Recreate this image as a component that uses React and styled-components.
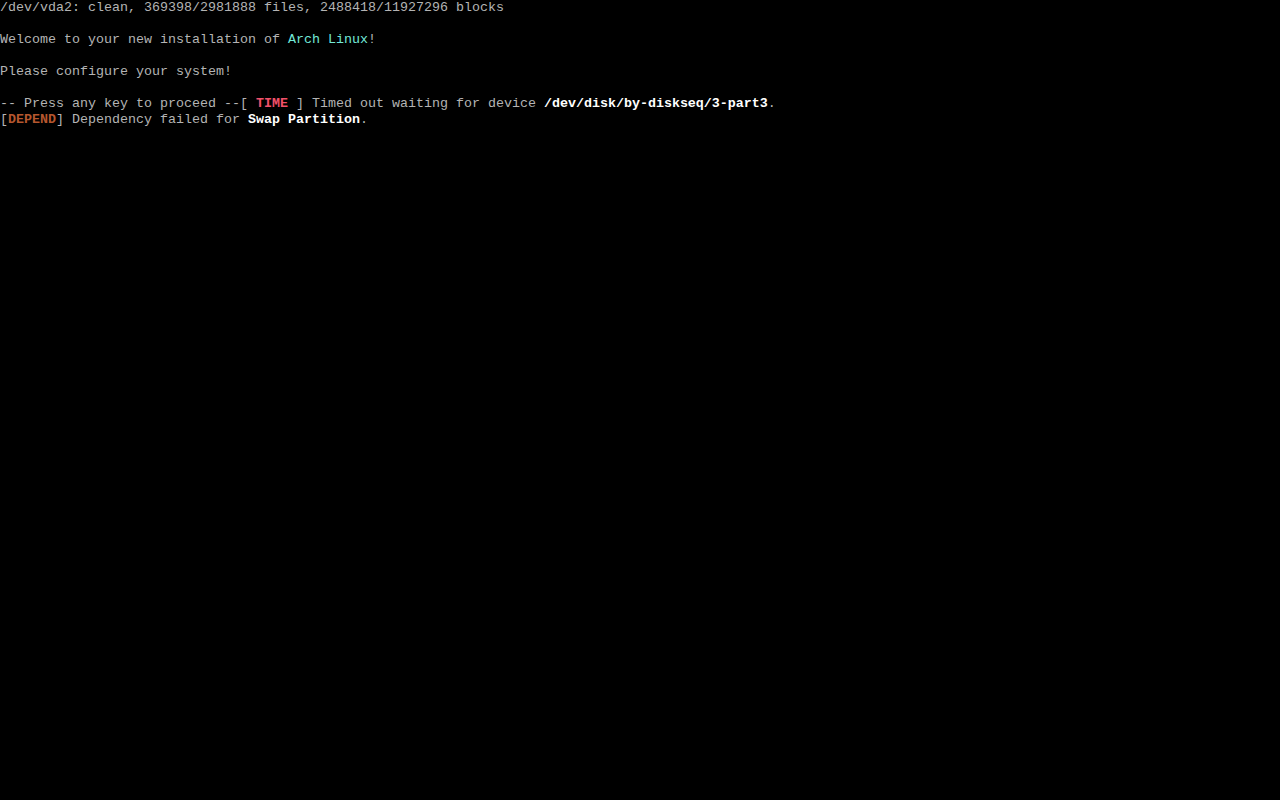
import React from "react";
import styled, { createGlobalStyle } from "styled-components";

const Global = createGlobalStyle`
  html, body { margin: 0; padding: 0; background: #000; }
  body { width: 1280px; height: 800px; overflow: hidden; }
`;

const Screen = styled.div`
  width: 1280px;
  height: 800px;
  background: #000;
  color: #b4b4b4;
  font-family: "Liberation Mono", "DejaVu Sans Mono", monospace;
  font-size: 13.33px;
  line-height: 16px;
  display: flex;
  flex-direction: column;
  white-space: pre;
  -webkit-font-smoothing: none;
`;

const Line = styled.div`
  height: 16px;
`;

const tones = {
  cyan: "#72e8d8",
  white: "#ffffff",
  red: "#f2506a",
  brown: "#b5562e",
};

const Hl = styled.span`
  color: ${(p) => tones[p.$tone]};
  font-weight: ${(p) => (p.$bold ? "bold" : "normal")};
`;

export default function App() {
  return (
    <>
      <Global />
      <Screen>
        <Line>/dev/vda2: clean, 369398/2981888 files, 2488418/11927296 blocks</Line>
        <Line />
        <Line>
          Welcome to your new installation of <Hl $tone="cyan">Arch Linux</Hl>!
        </Line>
        <Line />
        <Line>Please configure your system!</Line>
        <Line />
        <Line>
          -- Press any key to proceed --[ <Hl $tone="red" $bold>TIME</Hl> ] Timed out waiting for device{" "}
          <Hl $tone="white" $bold>/dev/disk/by-diskseq/3-part3</Hl>.
        </Line>
        <Line>
          [<Hl $tone="brown" $bold>DEPEND</Hl>] Dependency failed for <Hl $tone="white" $bold>Swap Partition</Hl>.
        </Line>
      </Screen>
    </>
  );
}
